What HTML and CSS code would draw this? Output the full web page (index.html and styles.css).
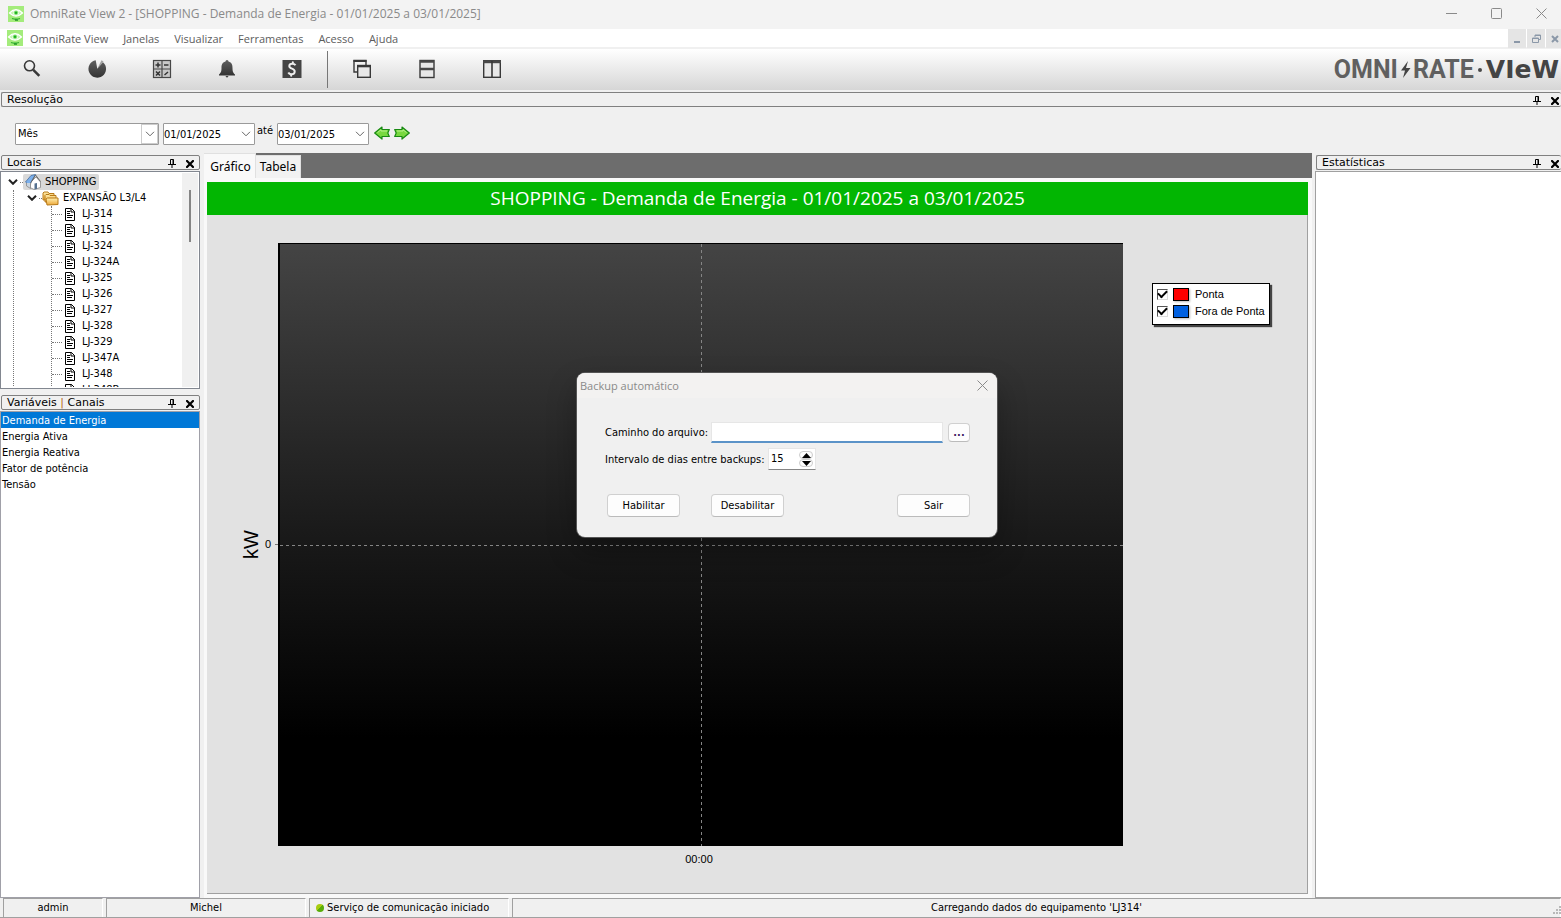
FILE: index.html
```html
<!DOCTYPE html>
<html lang="pt-BR">
<head>
<meta charset="utf-8">
<title>OmniRate View 2</title>
<link rel="stylesheet" href="styles.css">
</head>
<body>
<svg class="defs" aria-hidden="true">
  <defs>
    <linearGradient id="dark" x1="0" y1="0" x2="0" y2="1"><stop offset="0" stop-color="#606060"/><stop offset="1" stop-color="#333"/></linearGradient>
    <linearGradient id="gold" x1="0" y1="0" x2="0" y2="1"><stop offset="0" stop-color="#fff0b0"/><stop offset="1" stop-color="#eda83a"/></linearGradient>
    <symbol id="app" viewBox="0 0 16 16"><rect width="16" height="16" fill="#a4ec7c"/><path d="M1.500 7Q8 .5 14.500 7Q8 13 1.500 7Z" fill="#b8f4a4" stroke="#fff" stroke-width="1.200"/><circle cx="8" cy="6.800" r="2.800" fill="#8fe87c" stroke="#fff" stroke-width=".8"/><circle cx="8" cy="6.800" r="1.300" fill="#1fae24"/><path d="M4 12.500q4 1.500 8 0" fill="none" stroke="#30b030" stroke-width="1.300"/><path d="M7 13.500h3v1.200H7z" fill="#168b20"/></symbol>
    <symbol id="pin" viewBox="0 0 8 9"><path d="M2.500 5V.5h3V5M5 .5V5M0 5.500h8M4 5.500V9" fill="none" stroke="#000"/></symbol>
    <symbol id="cross" viewBox="0 0 8 8"><path d="M1 1l6 6M7 1L1 7" stroke="#000" stroke-width="2.200" stroke-linecap="square"/></symbol>
    <symbol id="chev" viewBox="0 0 10 6"><path d="M1 .8L5 4.800L9 .8" fill="none" stroke="currentColor"/></symbol>
    <symbol id="doc" viewBox="0 0 10 13"><path d="M.5.5h6l3 3v9h-9z" fill="#fff" stroke="#000"/><path d="M6 0v4h4M2 3.500h3M2 5.500h3M2 7.500h6M2 9.500h5" fill="none" stroke="#000"/></symbol>
    <symbol id="arrow" viewBox="0 0 16 14"><path d="M15.300 3.500H8V1L.7 7L8 13v-2.500h7.300l-1.500-3.500z" fill="#78d840" stroke="#188a12" stroke-width="1.200" stroke-linejoin="round"/><path d="M3.500 6.500L7 3.800v1.200h6" fill="none" stroke="#b6f08c"/></symbol>
  </defs>
</svg>

<div class="app">
  <header class="titlebar">
    <svg class="logo16"><use href="#app"/></svg>
    <h1 class="win-title">OmniRate View 2 - [SHOPPING - Demanda de Energia - 01/01/2025 a 03/01/2025]</h1>
    <div class="win-buttons">
      <button class="bare" aria-label="Minimizar"><svg width="11" height="11"><path d="M0 5.500h11" stroke="#8a8a8a"/></svg></button>
      <button class="bare" aria-label="Maximizar"><svg width="11" height="11"><rect x=".5" y=".5" width="10" height="10" rx="1" fill="none" stroke="#8a8a8a"/></svg></button>
      <button class="bare" aria-label="Fechar"><svg width="11" height="11"><path d="M.5.5l10 10M10.500.5l-10 10" stroke="#8a8a8a"/></svg></button>
    </div>
  </header>

  <nav class="menubar">
    <svg class="logo16"><use href="#app"/></svg>
    <button class="menu">OmniRate View</button>
    <button class="menu">Janelas</button>
    <button class="menu">Visualizar</button>
    <button class="menu">Ferramentas</button>
    <button class="menu">Acesso</button>
    <button class="menu">Ajuda</button>
    <div class="mdi">
      <button class="mdi-btn" aria-label="Minimizar janela"><svg width="8" height="10"><path d="M1 8h6" stroke="#8b98a8" stroke-width="2"/></svg></button>
      <button class="mdi-btn" aria-label="Restaurar janela"><svg width="9" height="9"><path d="M3 3V1h5.500v4.500H6.500M.5 4h6v4.500h-6zM3 1.500h5.500M.5 4.500h6" fill="none" stroke="#8b98a8"/></svg></button>
      <button class="mdi-btn" aria-label="Fechar janela"><svg width="8" height="8"><path d="M1 1l6 6M7 1L1 7" stroke="#8b98a8" stroke-width="2"/></svg></button>
    </div>
  </nav>

  <div class="toolbar">
    <div class="tools">
      <button class="tool" aria-label="Pesquisar"><svg viewBox="0 0 20 20"><circle cx="7.500" cy="6.800" r="5" fill="none" stroke="#383838" stroke-width="1.600"/><path d="M11.300 10.800l6 6" stroke="#383838" stroke-width="2.600"/></svg></button>
      <button class="tool" aria-label="Demanda"><svg viewBox="0 0 20 20"><path d="M10.300 9.700L8.700 1.200A8.800 8.800 0 1 0 16 3.200z" fill="url(#dark)"/><path d="M10.300 9.700L16.500 2.500L14.500 1.200z" fill="#555" opacity=".5"/></svg></button>
      <button class="tool" aria-label="Calculadora"><svg viewBox="0 0 20 20"><rect x="1.500" y="1.500" width="17" height="17" fill="#c8c8c8" stroke="#484848" stroke-width="1.200"/><path d="M10 1v18M1 10h18" stroke="#484848" stroke-width="1.200"/><path d="M3.500 6h5M6 3.500v5M12 6h4.500M4 12.500l4 4M8 12.500l-4 4M12.500 16l3.500-3" stroke="#333" stroke-width="1.500"/></svg></button>
      <button class="tool" aria-label="Alarmes"><svg viewBox="0 0 20 20"><path d="M10 1a1.500 1.500 0 0 1 1.500 1.500C15 3.500 15.500 6 15.500 9c0 4 1 5 2.500 6.500v1H2v-1C3.500 14 4.500 13 4.500 9c0-3 .5-5.500 4-6.500A1.500 1.500 0 0 1 10 1z" fill="url(#dark)"/><path d="M8.500 17h3q-1.500 3-3 0" fill="#444"/></svg></button>
      <button class="tool" aria-label="Faturamento"><svg viewBox="0 0 20 20"><rect x=".5" y="1" width="19" height="18" fill="#444"/><path d="M13.500 6.200Q12.500 4.700 10.300 4.700Q7.400 4.700 7.300 7Q7.300 8.700 10 9.600Q12.900 10.600 12.700 12.800Q12.300 15.200 9.700 15.200Q7.200 15.200 6.300 13.500M11 2.500L10.600 4.700M9.400 15.200L9 17.500" fill="none" stroke="#eee" stroke-width="2"/></svg></button>
    </div>
    <div class="tools tools-win">
      <button class="tool" aria-label="Cascata"><svg viewBox="0 0 20 20"><path d="M5 13H2V1.500h12V6" fill="none" stroke="#383838" stroke-width="1.400"/><path d="M1.500 2h13" stroke="#383838" stroke-width="2"/><rect x="5.700" y="6.500" width="12.600" height="11.800" fill="#e8e8e8" stroke="#383838" stroke-width="1.400"/><path d="M5 7.300h14" stroke="#383838" stroke-width="2"/></svg></button>
      <button class="tool" aria-label="Lado a lado horizontal"><svg viewBox="0 0 20 20"><rect x="3" y="1.500" width="14" height="17" fill="#e8e8e8" stroke="#383838" stroke-width="1.400"/><path d="M3 2.500h14M3 10h14" stroke="#484848" stroke-width="2.600"/></svg></button>
      <button class="tool" aria-label="Lado a lado vertical"><svg viewBox="0 0 20 20"><rect x="1.700" y="1.700" width="16.600" height="16.600" fill="#e8e8e8" stroke="#383838" stroke-width="1.400"/><path d="M1 2.700h18" stroke="#484848" stroke-width="3"/><path d="M10 2v16" stroke="#383838" stroke-width="1.600"/></svg></button>
    </div>
    <div class="brand"><span>OMNI</span><svg class="bolt" viewBox="0 0 11 19"><path d="M8 1L1 10.500h4L3 18l7.500-10H6z" fill="#444"/></svg><span>RATE</span><i class="dot"></i><b class="brand-view">VIeW</b></div>
  </div>

  <section class="resolution">
    <div class="caption"><h2>Resolução</h2><button class="bare" aria-label="Fixar"><svg class="pin"><use href="#pin"/></svg></button><button class="bare" aria-label="Fechar"><svg class="cross"><use href="#cross"/></svg></button></div>
    <form class="period">
      <div class="combo wide"><select aria-label="Período"><option>Mês</option></select><span class="combo-btn boxed"><svg><use href="#chev"/></svg></span></div>
      <div class="combo"><input type="text" aria-label="Data inicial" value="01/01/2025"><span class="combo-btn"><svg><use href="#chev"/></svg></span></div>
      <label for="until">até</label>
      <div class="combo"><input type="text" id="until" value="03/01/2025"><span class="combo-btn"><svg><use href="#chev"/></svg></span></div>
      <button type="button" class="bare step" aria-label="Anterior"><svg><use href="#arrow"/></svg></button>
      <button type="button" class="bare step next" aria-label="Próximo"><svg><use href="#arrow"/></svg></button>
    </form>
  </section>

  <main class="work">
    <aside class="left">
      <section class="places">
        <div class="caption"><h2>Locais</h2><button class="bare" aria-label="Fixar"><svg class="pin"><use href="#pin"/></svg></button><button class="bare" aria-label="Fechar"><svg class="cross"><use href="#cross"/></svg></button></div>
        <div class="treebox">
          <div class="tree">
            <div class="node"><svg class="twist"><use href="#chev"/></svg><span class="stub root"></span><span class="picked"><svg class="house" viewBox="0 0 16 16"><path d="M6 8l5-5 4.500 5v5.500L9 15.500l-4-2z" fill="#fff" stroke="#888" stroke-width=".8"/><path d="M.5 8L6 1.500l4.500-1L5.500 9l-2 1.500z" fill="#7bb0ec" stroke="#456da0" stroke-width=".8"/><path d="M6 8.500L10.500 1l5 6.500" fill="none" stroke="#666"/><path d="M1.500 9v3l4 2.500V9" fill="#c9d4e0" stroke="#888" stroke-width=".8"/><path d="M9.500 9.500l2.500-.5v6l-2.500.500z" fill="#56718f"/></svg>SHOPPING</span></div>
            <div class="branch">
              <div class="node"><svg class="twist"><use href="#chev"/></svg><span class="stub"></span><svg class="folder" viewBox="0 0 17 15"><path d="M1 9V2l1-1h4l1 1.500h5V9z" fill="url(#gold)" stroke="#b87a18"/><path d="M3 11V4.500l1-1h3l1 1h6V11z" fill="url(#gold)" stroke="#b87a18"/><path d="M5 14l-1-6 1.500-1h10.500v6.500z" fill="url(#gold)" stroke="#b87a18"/></svg>EXPANSÃO L3/L4</div>
              <ul class="leaves">
                <li><svg class="doc"><use href="#doc"/></svg>LJ-314</li>
                <li><svg class="doc"><use href="#doc"/></svg>LJ-315</li>
                <li><svg class="doc"><use href="#doc"/></svg>LJ-324</li>
                <li><svg class="doc"><use href="#doc"/></svg>LJ-324A</li>
                <li><svg class="doc"><use href="#doc"/></svg>LJ-325</li>
                <li><svg class="doc"><use href="#doc"/></svg>LJ-326</li>
                <li><svg class="doc"><use href="#doc"/></svg>LJ-327</li>
                <li><svg class="doc"><use href="#doc"/></svg>LJ-328</li>
                <li><svg class="doc"><use href="#doc"/></svg>LJ-329</li>
                <li><svg class="doc"><use href="#doc"/></svg>LJ-347A</li>
                <li><svg class="doc"><use href="#doc"/></svg>LJ-348</li>
                <li><svg class="doc"><use href="#doc"/></svg>LJ-348B</li>
              </ul>
            </div>
          </div>
          <div class="scroll"><div class="thumb"></div></div>
        </div>
      </section>
      <section class="vars">
        <div class="caption"><h2>Variáveis <span class="bar">|</span> Canais</h2><button class="bare" aria-label="Fixar"><svg class="pin"><use href="#pin"/></svg></button><button class="bare" aria-label="Fechar"><svg class="cross"><use href="#cross"/></svg></button></div>
        <ul class="varlist">
          <li class="on">Demanda de Energia</li>
          <li>Energia Ativa</li>
          <li>Energia Reativa</li>
          <li>Fator de potência</li>
          <li>Tensão</li>
        </ul>
      </section>
    </aside>

    <section class="center">
      <div class="tabs"><button class="tab active">Gráfico</button><button class="tab">Tabela</button></div>
      <div class="sheet">
        <h2 class="chart-title">SHOPPING - Demanda de Energia - 01/01/2025 a 03/01/2025</h2>
        <div class="chart">
          <div class="yaxis"><span class="unit">kW</span><span class="zero">0</span><i class="tick"></i></div>
          <div class="plot"><svg width="100%" height="100%"><line x1="50%" y1="0" x2="50%" y2="100%"/><line x1="0" y1="50%" x2="100%" y2="50%"/></svg></div>
          <div class="side">
            <div class="legend">
              <label><input type="checkbox" checked><i class="swatch red"></i>Ponta</label>
              <label><input type="checkbox" checked><i class="swatch blue"></i>Fora de Ponta</label>
            </div>
          </div>
          <div class="xaxis">00:00</div>
        </div>
      </div>
    </section>

    <aside class="stats">
      <div class="caption"><h2>Estatísticas</h2><button class="bare" aria-label="Fixar"><svg class="pin"><use href="#pin"/></svg></button><button class="bare" aria-label="Fechar"><svg class="cross"><use href="#cross"/></svg></button></div>
      <div class="stats-body"></div>
    </aside>
  </main>

  <footer class="status">
    <div class="cell user">admin</div>
    <div class="cell name">Michel</div>
    <div class="cell service"><i class="led"></i>Serviço de comunicação iniciado</div>
    <div class="cell load">Carregando dados do equipamento 'LJ314'</div>
    <svg class="grip" width="9" height="9"><path d="M7 0h2v2H7zM7 3h2v2H7zM4 3h2v2H4zM7 6h2v2H7zM4 6h2v2H4zM1 6h2v2H1z" fill="#b8b8b8"/></svg>
  </footer>

  <div class="dialog" role="dialog" aria-labelledby="dlg-title">
    <div class="dlg-head"><h2 id="dlg-title">Backup automático</h2><button class="bare" aria-label="Fechar"><svg width="11" height="11"><path d="M.5.5l10 10M10.500.5l-10 10" stroke="#8a8a8a"/></svg></button></div>
    <form class="dlg-body">
      <div class="row"><label for="path">Caminho do arquivo:</label><input type="text" id="path" class="path"><button type="button" class="btn browse">...</button></div>
      <div class="row"><label for="days">Intervalo de dias entre backups:</label>
        <div class="spin"><input type="text" id="days" value="15"><div class="spin-btns"><button type="button" aria-label="Aumentar"><svg width="9" height="5"><path d="M0 5L4.500 0L9 5z"/></svg></button><button type="button" aria-label="Diminuir"><svg width="9" height="5"><path d="M0 0h9L4.500 5z"/></svg></button></div></div>
      </div>
      <div class="actions"><button type="button" class="btn">Habilitar</button><button type="button" class="btn">Desabilitar</button><button type="button" class="btn last">Sair</button></div>
    </form>
  </div>
</div>
</body>
</html>
```
FILE: styles.css
```css
* { box-sizing: border-box; }
body {
  margin: 0;
  background: #f0f0f0;
  color: #000;
  font: 11px/16px "DejaVu Sans Condensed", "DejaVu Sans", Tahoma, sans-serif;
}
h1, h2, ul { margin: 0; padding: 0; font: inherit; list-style: none; }
button, input, select { font: inherit; color: inherit; margin: 0; padding: 0; }
svg { display: block; flex: none; }
.defs { position: absolute; width: 0; height: 0; }
.bare { border: 0; background: none; display: flex; }
.app { position: relative; display: flex; flex-direction: column; min-height: 100vh; overflow: hidden; }
.logo16 { width: 16px; height: 16px; }

.titlebar, .menubar { font: 12px/18px "Open Sans", "Noto Sans", sans-serif; display: flex; align-items: center; padding-left: 7px; }
.titlebar { height: 29px; background: #f3f3f3; color: #8a8a8a; padding: 0 14px 2px 8px; }
.win-title { padding-left: 6px; }
.win-buttons { margin-left: auto; display: flex; gap: 34px; }
.menubar { height: 20px; background: #fff; border-bottom: 2px solid #f0f0f0; color: #5c5c5c; }
.menu { border: 0; background: none; padding: 2px 7px 0; margin-right: 1px; font-size: 11px; line-height: 16px; }
.mdi { margin: 0 -3px 0 auto; display: flex; gap: 1px; align-self: flex-start; }
.mdi-btn { width: 18px; height: 19px; border: 0; background: #e5e5e5; display: grid; place-items: center; }

.toolbar { height: 41px; background: linear-gradient(#fff, #d6d6d6); display: flex; align-items: center; }
.tools { display: flex; gap: 45px; height: 37px; align-items: center; padding: 0 0 1px 22px; }
.tools:first-child { padding-right: 25px; border-right: 1px solid #777; }
.tools-win { padding-left: 24px; }
.tool { width: 20px; height: 20px; border: 0; background: none; }
.tool svg { width: 20px; height: 20px; }
.brand { margin-left: auto; padding-right: 2px; display: flex; align-items: center; color: #606060; font: 700 25px/30px Roboto, sans-serif; }
.bolt { width: 11px; height: 19px; margin: 0 2px; }
.dot { width: 4px; height: 4px; border-radius: 2px; background: #484848; margin: 0 4px; }
.brand-view { font: 700 25px/30px "DejaVu Sans", sans-serif; color: #444; }

.caption { height: 15px; border: 1px solid #808080; border-radius: 2px; background: #f0f0f0; display: flex; align-items: center; padding: 0 5px; font: 11px/13px "DejaVu Sans", Verdana, sans-serif; }
.caption h2 { flex: 1; }
.bar { color: #b86a10; }
.pin { width: 8px; height: 9px; margin-top: 1px; }
.cross { width: 8px; height: 8px; margin-left: 10px; margin-top: 2px; }
.resolution { padding: 2px 0 0 1px; height: 63px; }
.resolution .caption, .stats .caption { padding-right: 2px; border-right: 0; }
.period { display: flex; padding: 16px 0 0 14px; }
.combo { position: relative; width: 92px; height: 22px; }
.combo.wide { width: 144px; margin-right: 4px; }
.combo input, .combo select { width: 100%; height: 22px; border: 1px solid #9a9a9a; border-radius: 1px; background: #fff; padding: 0; appearance: none; outline: 0; }
.combo select { padding-left: 2px; }
.combo-btn { position: absolute; right: 1px; top: 1px; width: 17px; height: 20px; display: grid; place-items: center; color: #666; pointer-events: none; }
.boxed { border: 1px solid #ccc; }
.combo-btn svg { width: 10px; height: 6px; }
.period label { width: 22px; padding-left: 2px; line-height: 16px; }
.step { padding: 3px 0 0 5px; }
.step svg { width: 16px; height: 14px; }
.step.next { padding-left: 4px; }
.step.next svg { transform: scaleX(-1); }

.work { flex: 1; display: grid; grid-template-columns: 200px 1fr 245px; column-gap: 4px; }
.left, .places, .vars, .center, .stats { display: flex; flex-direction: column; min-height: 0; }
.left { padding-top: 2px; }
.left .caption { margin-left: 1px; }
.treebox { height: 218px; margin-top: 1px; border: 1px solid #828790; background: #fff; display: flex; overflow: hidden; }
.tree { flex: 1; overflow: hidden; padding: 2px 0 0 7px; height: 215px; }
.node { display: flex; align-items: center; height: 16px; white-space: nowrap; }
.twist { width: 10px; height: 6px; color: #222; stroke-width: 2; }
.stub { width: 3px; margin-left: 2px; border-top: 1px dotted #777; }
.picked { display: flex; align-items: center; background: #d9d9d9; padding: 0 3px 0 2px; border-radius: 2px; }
.house { width: 16px; height: 16px; margin-right: 4px; }
.folder { width: 17px; height: 15px; margin: 1px 4px 0 0; }
.branch { margin-left: 5px; padding-left: 13px; border-left: 1px dotted #777; }
.leaves { margin-left: 24px; border-left: 1px dotted #777; }
.leaves li { display: flex; align-items: center; height: 16px; line-height: 16px; }
.leaves li::before { content: ""; width: 10px; border-top: 1px dotted #777; margin-right: 3px; }
.doc { width: 10px; height: 13px; margin-right: 7px; }
.scroll { width: 16px; background: #f0f0f0; padding: 17px 0 0 7px; margin: 1px 1px 1px 0; }
.thumb { width: 2px; height: 52px; background: #858585; }
.vars { flex: 1; padding-top: 6px; }
.varlist { flex: 1; margin-top: 1px; border: 1px solid #a0a0a8; background: #fff; }
.varlist li { padding: 1px 0 0 1px; height: 16px; line-height: 15px; }
.varlist .on { background: #0078d7; color: #fff; }

.tabs { background: #6d6d6d; height: 25px; display: flex; }
.tab { border: 1px solid #e0e0e0; border-width: 1px 1px 0 0; background: #f2f2f2; font: 12px/20px "Noto Sans", sans-serif; width: 45px; margin-top: 2px; height: 23px; padding: 0; }
.tab.active { width: 52px; margin-top: 0; height: 25px; background: #f9f9f9; padding: 2px 0 0 2px; }
.sheet { flex: 1; display: flex; flex-direction: column; background: #f9f9f9; padding: 4px 4px 4px 3px; }
.chart-title { height: 33px; background: #02b602; color: #fff; font: 19px/33px "Open Sans", "Noto Sans", sans-serif; text-align: center; }
.chart { flex: 1; background: #e2e2e2; border: 1px solid #a0a0a0; border-width: 0 1px 1px 0; display: grid; grid-template: 28px 1fr 47px / 71px 1fr 184px; }
.yaxis { grid-area: 2 / 1; display: flex; align-items: center; justify-content: flex-end; }
.unit { writing-mode: vertical-rl; transform: rotate(180deg); font: 20px/24px "Liberation Sans", Arial, sans-serif; margin-right: 2px; }
.zero, .xaxis { font: 11px/13px "Liberation Sans", Arial, sans-serif; }
.tick { width: 3px; border-top: 1px solid #777; margin-left: 4px; }
.plot { grid-area: 2 / 2; background: linear-gradient(#444, #181818 50%, #000 82%); border-left: 2px solid #000; border-top: 1px solid #000; overflow: hidden; min-height: 0; position: relative; }
.plot svg { position: absolute; inset: 0; }
.plot line { stroke: #858585; stroke-dasharray: 3 3; shape-rendering: crispEdges; }
.xaxis { grid-area: 3 / 2; text-align: center; padding: 7px 3px 0 0; }
.side { grid-area: 2 / 3; padding: 40px 0 0 29px; }
.legend { width: 118px; height: 42px; background: #fff; border: 1px solid #000; box-shadow: 2px 2px 1px #444; padding: 2px 0 0 4px; font: 11px/17px "Liberation Sans", Arial, sans-serif; }
.legend label { display: flex; align-items: center; height: 17px; white-space: nowrap; }
.legend input { appearance: none; width: 11px; height: 11px; background: #fff; border: 1px solid; border-color: #555 #ddd #ddd #555; display: grid; place-items: center; }
.legend input::after { content: ""; width: 7px; height: 4px; border: solid #000; border-width: 0 0 2px 2px; transform: rotate(-45deg); margin-top: -3px; }
.swatch { width: 16px; height: 13px; border: 1px solid #000; margin: 0 6px 0 5px; box-shadow: 1px 1px 2px #bbb; }
.red { background: #f00; }
.blue { background: #0060e0; }

.stats { padding-top: 2px; margin-left: -1px; }
.stats .caption { margin-left: 1px; }
.stats-body { flex: 1; margin-top: 1px; background: #fff; border: 1px solid #a0a0a0; border-right: 0; }

.status { height: 20px; display: flex; gap: 3px; padding-left: 3px; background: #f0f0f0; border-bottom: 1px solid #a0a0a0; position: relative; line-height: 18px; }
.cell { border: 1px solid #a0a0a0; border-right-color: #fff; border-bottom: 0; text-align: center; height: 19px; white-space: nowrap; }
.user { width: 100px; }
.name { width: 200px; }
.service { width: 200px; display: flex; align-items: center; padding-left: 6px; }
.load { flex: 1; }
.led { width: 8px; height: 8px; border-radius: 4px; background: linear-gradient(135deg, #a8cc10 50%, #58ac08 50%); margin-right: 3px; }
.grip { position: absolute; right: 0; bottom: 2px; }

.dialog { position: absolute; left: 577px; top: 373px; width: 420px; background: #f0f0f0; border-radius: 8px; overflow: hidden; box-shadow: 0 0 0 1px #555, 0 14px 30px rgba(0, 0, 0, .3); }
.dlg-head { height: 25px; background: #f3f2f1; display: flex; align-items: center; justify-content: space-between; padding: 0 9px 0 3px; color: #8a8a8a; font: 11px/18px "Open Sans", "Noto Sans", sans-serif; }
.dlg-body { padding: 23px 27px 20px 28px; }
.row { display: flex; align-items: center; height: 22px; margin-bottom: 5px; }
.row label { white-space: nowrap; padding-top: 2px; }
.path { width: 232px; height: 21px; margin-left: auto; background: #fff; border: 1px solid #e6e6e6; border-bottom: 2px solid #5b93c8; outline: 0; }
.btn { background: #fdfdfd; border: 1px solid #d0d0d0; border-bottom-color: #bbb; border-radius: 4px; height: 23px; width: 73px; padding-top: 1px; }
.btn.browse { width: 22px; height: 19px; margin-left: 5px; line-height: 16px; color: #402060; font-weight: 700; }
.spin { margin-left: auto; margin-right: 154px; width: 48px; height: 22px; display: flex; background: #fff; border: 1px solid #e6e6e6; border-bottom-color: #868686; padding: 0 3px 0 2px; }
.spin input { width: 28px; border: 0; background: none; outline: 0; }
.spin-btns { display: flex; flex-direction: column; padding-top: 2px; }
.spin-btns button { width: 14px; height: 8px; border: 1px solid #ccc; border-radius: 4px; background: #fdfdfd; display: grid; place-items: center; }
.actions { display: flex; gap: 31px; padding: 19px 0 0 2px; }
.actions .last { margin-left: auto; }
```
